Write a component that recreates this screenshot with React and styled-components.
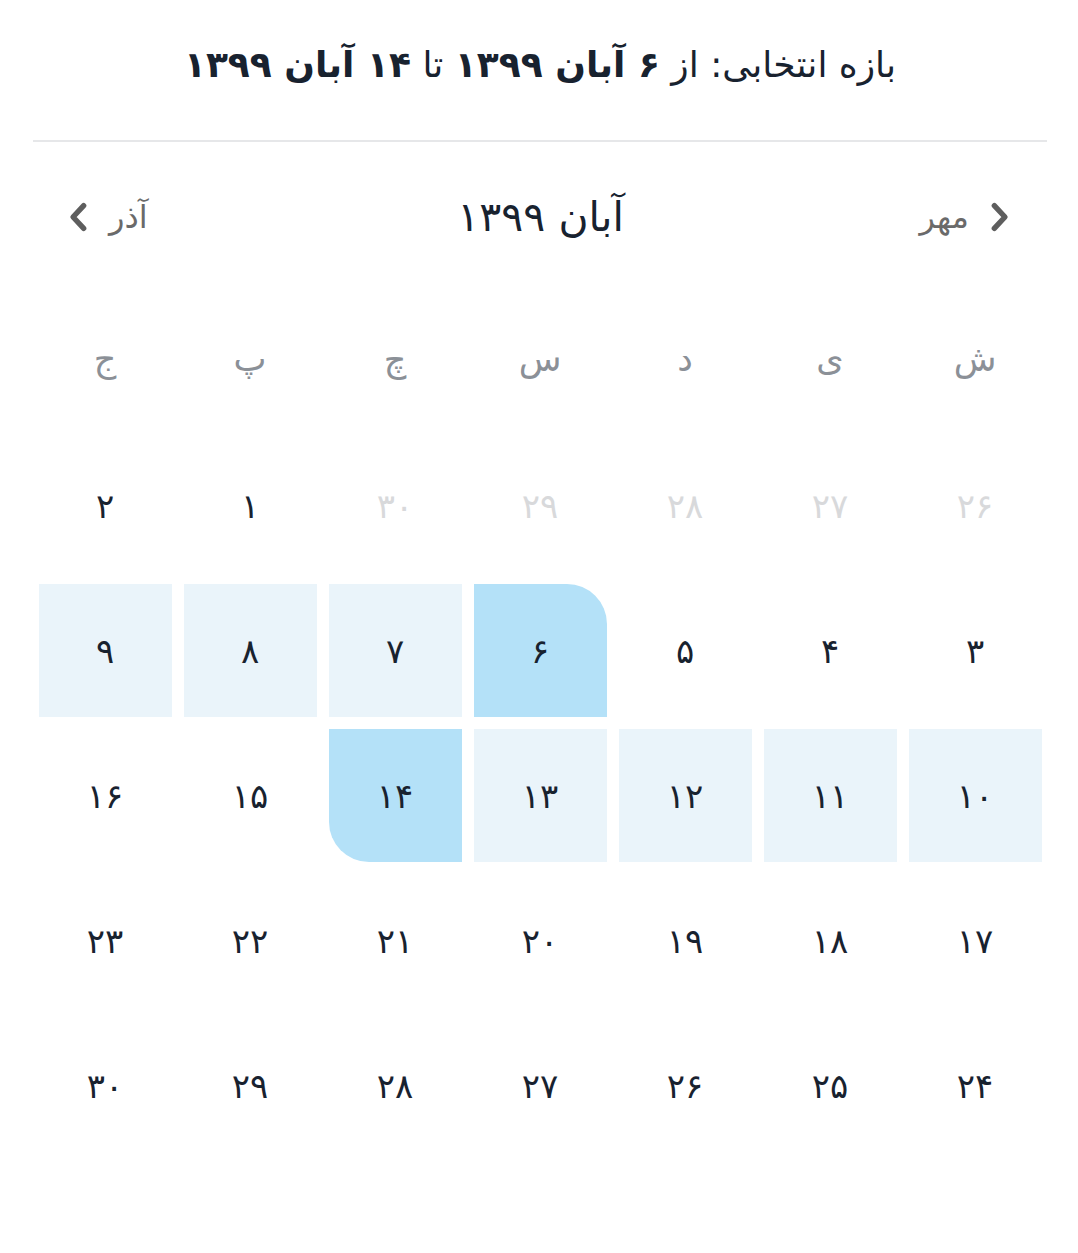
import React from "react";
import styled, { createGlobalStyle } from "styled-components";

const GlobalStyle = createGlobalStyle`
  html, body {
    margin: 0;
    padding: 0;
    background: #ffffff;
  }
  body {
    font-family: "DejaVu Sans", "Noto Sans", sans-serif;
  }
`;

const weekDays = ["ش", "ی", "د", "س", "چ", "پ", "ج"];

const rows = [
  [
    { d: "۲۶", off: true },
    { d: "۲۷", off: true },
    { d: "۲۸", off: true },
    { d: "۲۹", off: true },
    { d: "۳۰", off: true },
    { d: "۱" },
    { d: "۲" },
  ],
  [
    { d: "۳" },
    { d: "۴" },
    { d: "۵" },
    { d: "۶", state: "start" },
    { d: "۷", state: "range" },
    { d: "۸", state: "range" },
    { d: "۹", state: "range" },
  ],
  [
    { d: "۱۰", state: "range" },
    { d: "۱۱", state: "range" },
    { d: "۱۲", state: "range" },
    { d: "۱۳", state: "range" },
    { d: "۱۴", state: "end" },
    { d: "۱۵" },
    { d: "۱۶" },
  ],
  [
    { d: "۱۷" },
    { d: "۱۸" },
    { d: "۱۹" },
    { d: "۲۰" },
    { d: "۲۱" },
    { d: "۲۲" },
    { d: "۲۳" },
  ],
  [
    { d: "۲۴" },
    { d: "۲۵" },
    { d: "۲۶" },
    { d: "۲۷" },
    { d: "۲۸" },
    { d: "۲۹" },
    { d: "۳۰" },
  ],
];

function Chevron({ dir }) {
  return (
    <ChevronSvg viewBox="0 0 24 24" fill="none">
      {dir === "right" ? (
        <polyline points="8 4 15.5 12 8 20" />
      ) : (
        <polyline points="16 4 8.5 12 16 20" />
      )}
    </ChevronSvg>
  );
}

export default function App() {
  return (
    <Page dir="rtl">
      <GlobalStyle />
      <Header>
        <span>بازه انتخابی: </span>
        <span>از </span>
        <Strong>۶ آبان ۱۳۹۹</Strong>
        <span> تا </span>
        <Strong>۱۴ آبان ۱۳۹۹</Strong>
      </Header>
      <Divider />
      <Nav>
        <NavButton>
          <Chevron dir="right" />
          <span>مهر</span>
        </NavButton>
        <MonthTitle>آبان ۱۳۹۹</MonthTitle>
        <NavButton>
          <span>آذر</span>
          <Chevron dir="left" />
        </NavButton>
      </Nav>
      <Grid>
        {weekDays.map((w) => (
          <WeekDay key={w}>{w}</WeekDay>
        ))}
        {rows.flat().map((c, i) => (
          <Day key={i} $off={c.off} $state={c.state}>
            {c.d}
          </Day>
        ))}
      </Grid>
    </Page>
  );
}

const Page = styled.div`
  width: 1078px;
  min-height: 1253px;
  box-sizing: border-box;
  padding: 0 31px 0 33px;
  color: #18222f;
`;

const Header = styled.div`
  height: 128px;
  display: flex;
  align-items: center;
  justify-content: center;
  font-size: 36px;
  white-space: pre;
  color: #18222f;
`;

const Strong = styled.span`
  font-weight: 700;
`;

const Divider = styled.div`
  height: 2px;
  margin-top: 12px;
  background: #e6e7e9;
`;

const Nav = styled.div`
  height: 150px;
  display: flex;
  align-items: center;
  justify-content: space-between;
  padding: 0 30px 0 28px;
`;

const NavButton = styled.div`
  display: flex;
  align-items: center;
  gap: 14px;
  font-size: 32px;
  color: #6a6a6a;
  cursor: pointer;
`;

const ChevronSvg = styled.svg`
  width: 34px;
  height: 34px;
  stroke: #5e5e5e;
  stroke-width: 3.8;
  stroke-linecap: round;
  stroke-linejoin: round;
`;

const MonthTitle = styled.div`
  font-size: 41px;
  color: #18222f;
  margin-left: 14px;
`;

const Grid = styled.div`
  display: grid;
  grid-template-columns: repeat(7, 133px);
  grid-auto-rows: 133px;
  gap: 12px 12px;
  padding: 2px 6px 0 6px;
  justify-content: center;
`;

const WeekDay = styled.div`
  display: flex;
  align-items: center;
  justify-content: center;
  font-size: 35px;
  color: #8b9097;
  margin-top: -4px;
`;

const Day = styled.div`
  display: flex;
  align-items: center;
  justify-content: center;
  font-size: 34px;
  color: ${(p) => (p.$off ? "#d8d9db" : "#18222f")};
  background: ${(p) =>
    p.$state === "start" || p.$state === "end"
      ? "#b4e1f8"
      : p.$state === "range"
      ? "#eaf4fa"
      : "transparent"};
  border-top-right-radius: ${(p) => (p.$state === "start" ? "40px" : "0")};
  border-bottom-left-radius: ${(p) => (p.$state === "end" ? "40px" : "0")};
  cursor: ${(p) => (p.$off ? "default" : "pointer")};
`;
